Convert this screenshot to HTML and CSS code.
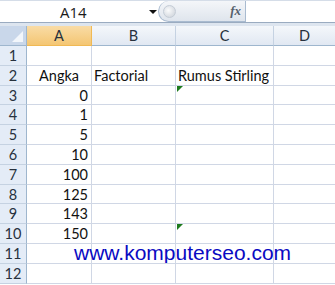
FILE: index.html
```html
<!DOCTYPE html>
<html>
<head>
<meta charset="utf-8">
<link rel="stylesheet" href="styles.css">
</head>
<body>
<div class="fbar">
  <div class="namebox"><span class="ref">A14</span><span class="arrow"></span></div>
  <div class="pill"><span class="knob"></span><span class="fx">fx</span></div>
  <div class="input"></div>
</div>
<div class="band"></div>
<div class="sheet">
  <div class="corner"><span class="tri"></span></div>
  <div class="ch sel">A</div><div class="ch">B</div><div class="ch">C</div><div class="ch last">D</div>

  <div class="rh">1</div><div class="c"></div><div class="c"></div><div class="c"></div><div class="c last"></div>
  <div class="rh">2</div><div class="c ctr">Angka</div><div class="c">Factorial</div><div class="c">Rumus Stirling</div><div class="c last"></div>
  <div class="rh">3</div><div class="c num">0</div><div class="c"></div><div class="c err"></div><div class="c last"></div>
  <div class="rh">4</div><div class="c num">1</div><div class="c"></div><div class="c"></div><div class="c last"></div>
  <div class="rh">5</div><div class="c num">5</div><div class="c"></div><div class="c"></div><div class="c last"></div>
  <div class="rh">6</div><div class="c num">10</div><div class="c"></div><div class="c"></div><div class="c last"></div>
  <div class="rh">7</div><div class="c num">100</div><div class="c"></div><div class="c"></div><div class="c last"></div>
  <div class="rh">8</div><div class="c num">125</div><div class="c"></div><div class="c"></div><div class="c last"></div>
  <div class="rh">9</div><div class="c num">143</div><div class="c"></div><div class="c"></div><div class="c last"></div>
  <div class="rh">10</div><div class="c num">150</div><div class="c"></div><div class="c err"></div><div class="c last"></div>
  <div class="rh">11</div><div class="c url-cell"><span class="url">www.komputerseo.com</span></div><div class="c"></div><div class="c"></div><div class="c last"></div>
  <div class="rh">12</div><div class="c"></div><div class="c"></div><div class="c"></div><div class="c last"></div>
</div>
</body>
</html>
```
FILE: styles.css
```css
* { box-sizing: border-box; }
html, body { margin: 0; padding: 0; background: #fff; overflow: hidden; }
body { width: 335px; height: 285px; font-family: Lato, "Open Sans", sans-serif; }

.fbar {
  display: flex;
  height: 23px;
  border-top: 1px solid #d5dde8;
  border-bottom: 1px solid #9aabc0;
  background: #fff;
}
.namebox {
  width: 158px;
  position: relative;
  display: flex;
  align-items: center;
  font-family: "Open Sans", sans-serif;
  font-size: 15px;
  color: #1a1a1a;
}
.ref { margin-left: 60px; }
.arrow {
  margin-left: 62px;
  width: 0; height: 0;
  border-left: 4px solid transparent;
  border-right: 4px solid transparent;
  border-top: 4px solid #111;
}
.pill {
  width: 88px;
  display: flex;
  align-items: center;
  justify-content: space-between;
  border: 1px solid #a9bbd0;
  border-top: none;
  border-radius: 11px 0 0 11px;
  background: linear-gradient(#f4f6f9, #dfe5ed);
  padding: 0 4px 0 4px;
}
.knob {
  width: 13px; height: 13px;
  border-radius: 50%;
  background: radial-gradient(circle at 40% 40%, #fafbfc, #c9cfd7);
  border: 1px solid #c4ccd6;
}
.fx {
  font-family: "Liberation Serif", serif;
  font-style: italic;
  font-weight: bold;
  font-size: 13px;
  color: #55606c;
}
.input { flex: 1; background: #fff; }

.band { height: 3px; background: #dde5ef; }

.sheet {
  display: grid;
  grid-template-columns: 27px 65px 84px 98px 61px;
  grid-template-rows: 20px 20px 20px 19px 20px 20px 20px 20px 19px 20px 20px 20px 20px;
  font-size: 14.5px;
  color: #111;
}
.corner {
  background: #c9d7ea;
  border-right: 1px solid #9eb6ce;
  border-bottom: 1px solid #9eb6ce;
  position: relative;
}
.tri {
  position: absolute;
  right: 3px; bottom: 3px;
  width: 0; height: 0;
  border-left: 11px solid transparent;
  border-bottom: 11px solid #f2f6fb;
}
.ch {
  background: linear-gradient(#f4f7fb, #e1e8f2);
  border-right: 1px solid #c5d2e2;
  border-bottom: 1px solid #9eb6ce;
  display: flex; align-items: center; justify-content: center;
  color: #27313d;
  font-size: 14.5px;
}
.ch.sel {
  background: linear-gradient(#f9dca6, #f4c673);
  border-right: 1px solid #f0b954;
  border-bottom: 1px solid #f0b954;
}
.ch.last { border-right: none; }
.rh {
  background: #e4ecf7;
  border-right: 1px solid #9eb6ce;
  border-bottom: 1px solid #c5d2e2;
  display: flex; align-items: center; justify-content: center;
  color: #27313d;
  font-size: 14.5px;
}
.c {
  border-right: 1px solid #d0d7e5;
  border-bottom: 1px solid #d0d7e5;
  display: flex; align-items: center;
  padding: 0 2px;
  white-space: nowrap;
  position: relative;
}
.c.last { border-right: none; }
.ctr { justify-content: center; }
.num { justify-content: flex-end; padding-right: 3px; }
.err::before {
  content: "";
  position: absolute;
  left: 1px; top: 0;
  width: 0; height: 0;
  border-top: 6px solid #1e7b1e;
  border-right: 6px solid transparent;
}
.url-cell { overflow: visible; }
.url {
  position: absolute;
  left: 47px;
  top: -3px;
  font-family: "Liberation Sans", Arial, sans-serif;
  font-size: 21px;
  color: #0a0ac2;
}
```
